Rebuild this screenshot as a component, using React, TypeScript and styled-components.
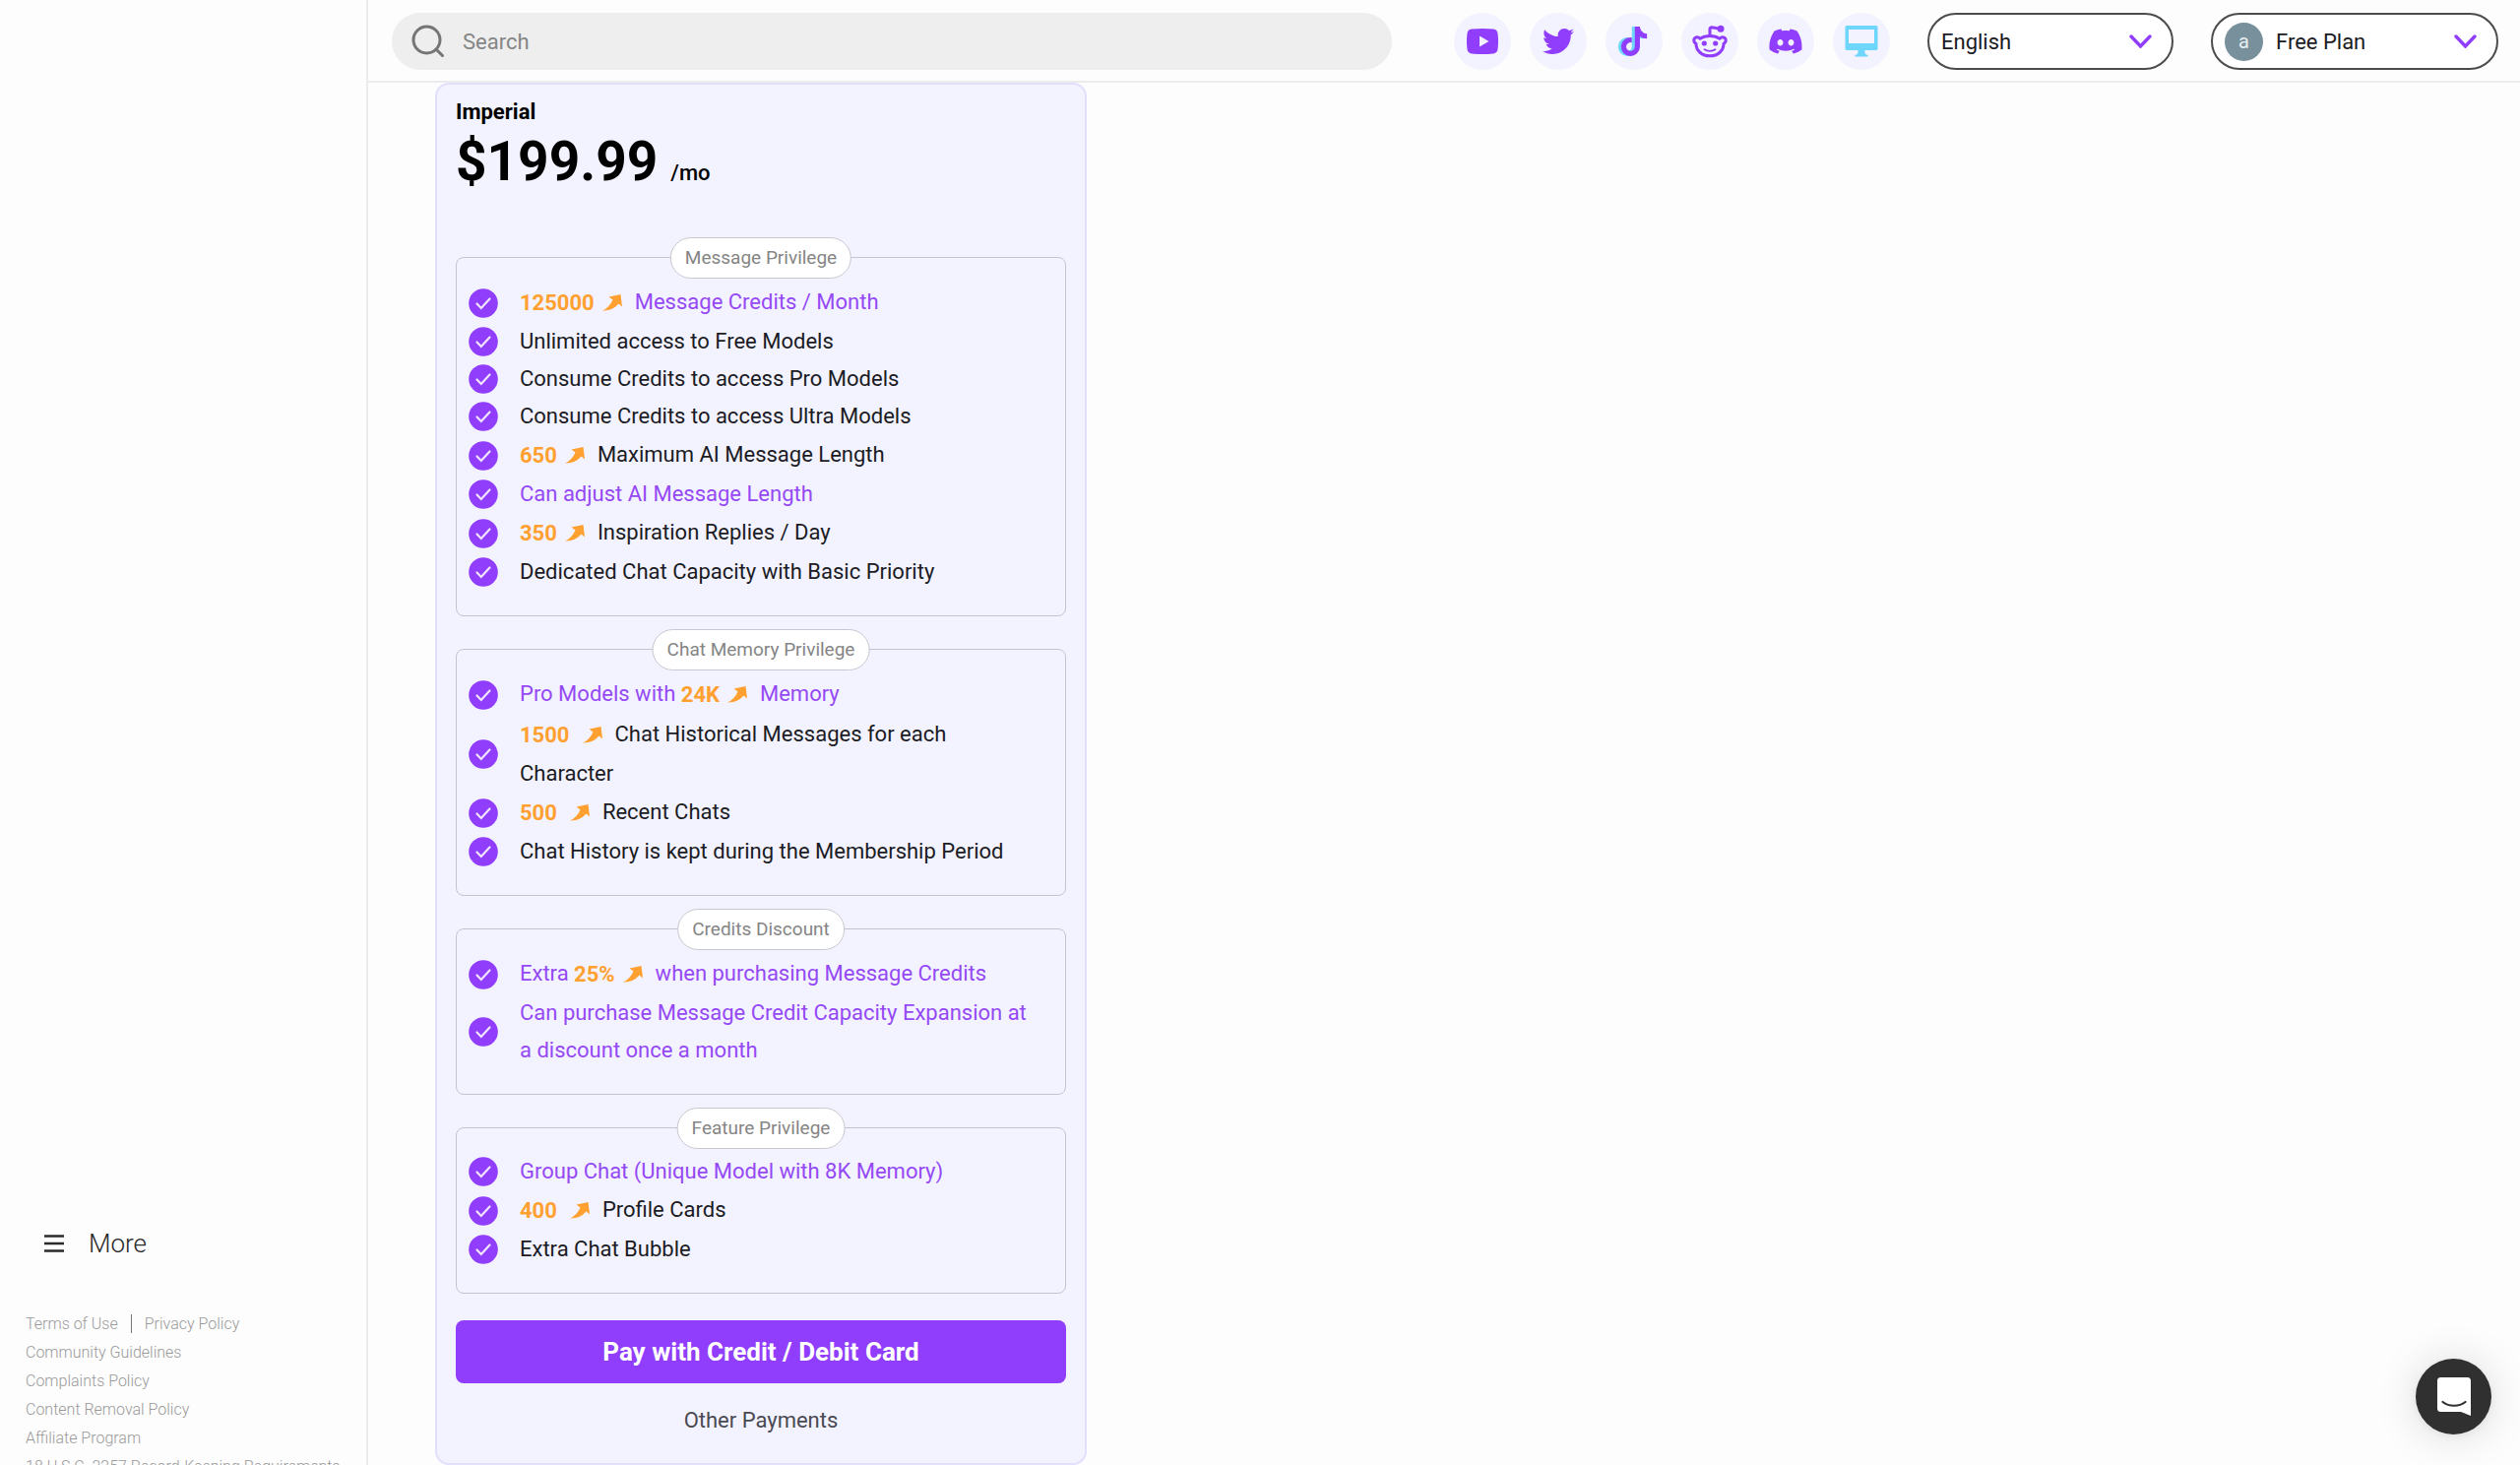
import React, { useState } from 'react';
import styled, { createGlobalStyle } from 'styled-components';
import { FaTwitter, FaDiscord, FaTiktok } from 'react-icons/fa';

const GlobalStyle = createGlobalStyle`
  *, *::before, *::after { box-sizing: border-box; }
  body {
    margin: 0;
    background: #fdfdfd;
    color: #1b1b24;
    font-family: Roboto, "Liberation Sans", sans-serif;
    font-size: 22px;
  }
  button, input, select { font: inherit; color: inherit; }
  ul { list-style: none; margin: 0; padding: 0; }
  h2, h3, p { margin: 0; }
`;

const purple = '#903dfc';
const sky = '#6fd6fb';

const Shell = styled.div`
  display: flex;
  height: 100vh;
  overflow: hidden;
`;

const Sidebar = styled.aside`
  display: flex;
  flex: none;
  flex-direction: column;
  width: 374px;
  border-right: 2px solid #ececee;
`;

const SideNav = styled.nav`
  display: flex;
  flex: 1;
  flex-direction: column;
  justify-content: flex-end;
  padding: 0 44px 43px;
`;

const MoreButton = styled.button`
  display: flex;
  align-items: center;
  gap: 24px;
  height: 48px;
  padding: 0;
  border: 0;
  background: none;
  color: #2a2a2a;
  font-size: 26px;
  font-weight: 300;
  cursor: pointer;
`;

const SideFooter = styled.footer`
  flex: none;
  height: 158px;
  padding-left: 26px;
  overflow: hidden;
  font-size: 16px;
  font-weight: 300;
  line-height: 29px;
  white-space: nowrap;
`;

const FooterRow = styled.li`
  display: flex;
  align-items: center;
  gap: 13px;
`;

const FooterLink = styled.a`
  color: #9a9a9a;
  text-decoration: none;
`;

const FooterDivider = styled.span`
  width: 1px;
  height: 19px;
  background: #777;
`;

const Main = styled.div`
  display: flex;
  flex: 1;
  flex-direction: column;
  min-width: 0;
`;

const Header = styled.header`
  display: flex;
  flex: none;
  align-items: center;
  gap: 38px;
  height: 84px;
  padding: 2px 22px 0 24px;
  border-bottom: 2px solid #ececee;
`;

const SearchBox = styled.label`
  display: flex;
  flex: 0 1 1016px;
  align-items: center;
  gap: 18px;
  height: 58px;
  margin-right: auto;
  padding: 0 20px;
  border-radius: 29px;
  background: #eeeeee;
  color: #757575;
`;

const SearchInput = styled.input`
  flex: 1;
  min-width: 0;
  padding: 0;
  border: 0;
  outline: 0;
  background: none;
  &::placeholder { color: #858585; opacity: 1; }
`;

const Socials = styled.nav`
  display: flex;
  gap: 19px;
`;

const SocialLink = styled.a`
  display: grid;
  place-items: center;
  width: 58px;
  height: 58px;
  border-radius: 50%;
  background: #f3f3ff;
  color: ${purple};
`;

const TikTokMark = styled.span`
  display: grid;
  svg { grid-area: 1 / 1; }
  svg:first-child { margin-left: -3px; color: ${sky}; }
`;

const Picker = styled.div<{ $width: number }>`
  display: flex;
  align-items: center;
  position: relative;
  width: ${(p) => p.$width}px;
  height: 58px;
  border: 2px solid #4c4c4c;
  border-radius: 29px;
  background: #fff;
`;

const PickerSelect = styled.select<{ $indent: number }>`
  appearance: none;
  width: 100%;
  height: 100%;
  padding: 0 60px 0 ${(p) => p.$indent}px;
  border: 0;
  border-radius: 29px;
  outline: 0;
  background: none;
  cursor: pointer;
`;

const PickerChevron = styled.svg`
  position: absolute;
  right: 20px;
  pointer-events: none;
`;

const Avatar = styled.span`
  display: grid;
  position: absolute;
  left: 12px;
  place-items: center;
  width: 39px;
  height: 39px;
  border-radius: 50%;
  background: #78909c;
  color: #e8eef0;
  font-size: 20px;
  pointer-events: none;
`;

const Content = styled.main`
  flex: 1;
  min-height: 0;
  padding: 0 68px;
  overflow: hidden;
`;

const PlanCard = styled.article`
  display: flex;
  flex-direction: column;
  width: 662px;
  max-width: 100%;
  padding: 12px 19px 25px;
  border: 2px solid #e2dffc;
  border-radius: 14px;
  background: #f3f3ff;
`;

const PlanName = styled.h2`
  color: #000;
  font-size: 22px;
  font-weight: 700;
  line-height: 32px;
`;

const Price = styled.p`
  display: flex;
  align-items: baseline;
  gap: 13px;
  margin-bottom: 51px;
  color: #000;
  font-size: 55px;
  font-weight: 700;
  line-height: 68px;
`;

const Period = styled.span`
  font-size: 22px;
  font-weight: 500;
`;

const Groups = styled.div`
  display: flex;
  flex-direction: column;
  gap: 33px;
  margin-bottom: 27px;
`;

const Group = styled.section`
  position: relative;
  padding: 25px 24px 25px 12px;
  border: 1px solid #c4c4d0;
  border-radius: 8px;
`;

const GroupTitle = styled.h3`
  position: absolute;
  top: 0;
  left: 50%;
  transform: translate(-50%, -50%);
  padding: 0 14px;
  border: 1px solid #c8c8cf;
  border-radius: 21px;
  background: #fff;
  color: #858585;
  font-size: 19px;
  font-weight: 400;
  line-height: 40px;
  white-space: nowrap;
`;

const Perk = styled.li<{ $accent?: boolean }>`
  display: flex;
  align-items: center;
  gap: 22px;
  color: ${(p) => (p.$accent ? '#9549f5' : '#1b1b24')};
  line-height: 38px;
`;

const PerkIcon = styled.svg`
  flex: none;
`;

const Amount = styled.strong<{ $wide?: boolean }>`
  margin-right: 13px;
  color: #ffa030;
  font-weight: 700;
  line-height: 41px;
  vertical-align: -1px;
  svg { margin-left: ${(p) => (p.$wide ? 13 : 8)}px; vertical-align: -1px; }
`;

const PayButton = styled.button`
  height: 64px;
  border: 0;
  border-radius: 8px;
  background: ${purple};
  color: #fff;
  font-size: 26px;
  font-weight: 700;
  cursor: pointer;
`;

const OtherButton = styled.button`
  align-self: center;
  margin-top: 20px;
  padding: 0;
  border: 0;
  background: none;
  color: #4a4a52;
  line-height: 36px;
  cursor: pointer;
`;

const ChatLauncher = styled.button`
  display: grid;
  position: fixed;
  right: 29px;
  bottom: 31px;
  place-items: center;
  width: 77px;
  height: 77px;
  padding: 0;
  border: 0;
  border-radius: 50%;
  background: #303030;
  box-shadow: 0 2px 8px rgba(0, 0, 0, 0.06), 0 2px 44px rgba(0, 0, 0, 0.14);
  cursor: pointer;
`;

const YouTubeIcon = () => (
  <svg width="32" height="26" viewBox="0 0 32 26" aria-hidden="true">
    <path fill="currentColor" fillRule="evenodd" d="M5 .6Q16-.5 27 .6q4 .4 4.5 4.400Q32.500 13 31.500 21q-.5 4-4.500 4.400Q16 26.500 5 25.400 1 25 .5 21-.5 13 .5 5 1 1 5 .600ZM13 7.500v11l9.500-5.500Z" />
  </svg>
);

const RedditIcon = () => (
  <svg width="36" height="34" viewBox="0 0 36 34" fill="none" stroke="currentColor" strokeWidth="3" strokeLinecap="round" strokeLinejoin="round" aria-hidden="true">
    <path d="M18 11.500c-4 0-7.500 1-10 2.800C5.500 11.500 1.800 13 1.800 16c0 1.600 1 2.700 2.200 3.300C3.800 26.500 10 31.800 18 31.800s14.200-5.300 14-12.500c1.200-.6 2.200-1.700 2.200-3.300 0-3-3.700-4.500-6.200-1.700-2.500-1.800-6-2.800-10-2.800Z" />
    <path d="M18 11.500v-7q0-1.700 1.800-1.700L27 4" />
    <path d="M12.500 25.300c3 2.200 8 2.200 11 0" strokeWidth="1.800" />
    <circle cx="12.300" cy="19" r="2.600" fill="currentColor" stroke="none" />
    <circle cx="23.700" cy="19" r="2.600" fill="currentColor" stroke="none" />
    <circle cx="29" cy="4.200" r="3.500" fill="currentColor" stroke="none" />
  </svg>
);

const DesktopIcon = () => (
  <svg width="34" height="32" viewBox="0 0 34 32" fill={sky} aria-hidden="true">
    <path fillRule="evenodd" d="M2 0h30q1.500 0 1.500 1.500v22q0 1.500-1.500 1.500H20.500v2.500q0 1.500 3 2.500v1.500h-13V30q3-1 3-2.500V25H2Q.5 25 .5 23.500v-22Q.5 0 2 0Zm2 4v14h26V4Z" />
  </svg>
);

const SearchIcon = () => (
  <svg width="34" height="34" viewBox="0 0 34 34" fill="none" stroke="currentColor" strokeWidth="3" strokeLinecap="round" aria-hidden="true">
    <circle cx="15.500" cy="15.500" r="13.500" />
    <path d="m25.500 25.500 6 6" />
  </svg>
);

const Chevron = () => (
  <PickerChevron width="23" height="14" viewBox="0 0 23 14" fill="none" stroke={purple} strokeWidth="3.400" strokeLinecap="round" aria-hidden="true">
    <path d="m2 2 9.500 10L21 2" />
  </PickerChevron>
);

const MenuIcon = () => (
  <svg width="22" height="20" viewBox="0 0 22 20" stroke="currentColor" strokeWidth="2.500" aria-hidden="true">
    <path d="M1 2.500h20M1 10h20M1 17.500h20" />
  </svg>
);

const CheckIcon = () => (
  <PerkIcon width="30" height="30" viewBox="0 0 30 30" fill="none" aria-hidden="true">
    <circle cx="15" cy="15" r="14.800" fill={purple} />
    <path d="m8.500 15.500 4.300 4.500 8.700-9.500" stroke="#f0e6ff" strokeWidth="2.200" strokeLinecap="round" />
  </PerkIcon>
);

const BoostArrow = () => (
  <svg width="20" height="17" viewBox="0 0 20 17" fill="currentColor" aria-hidden="true">
    <path d="M6.500 2.500 18.500 0l1.500 12.500-3.500-3Q10 17 0 16.500 7 13.500 10.500 5.500Z" />
  </svg>
);

type PerkData = { before?: string; amount?: string; wide?: boolean; text: string; accent?: boolean };

const groups: { title: string; perks: PerkData[] }[] = [
  {
    title: 'Message Privilege',
    perks: [
      { amount: '125000', text: 'Message Credits / Month', accent: true },
      { text: 'Unlimited access to Free Models' },
      { text: 'Consume Credits to access Pro Models' },
      { text: 'Consume Credits to access Ultra Models' },
      { amount: '650', text: 'Maximum AI Message Length' },
      { text: 'Can adjust AI Message Length', accent: true },
      { amount: '350', text: 'Inspiration Replies / Day' },
      { text: 'Dedicated Chat Capacity with Basic Priority' },
    ],
  },
  {
    title: 'Chat Memory Privilege',
    perks: [
      { before: 'Pro Models with ', amount: '24K', text: 'Memory', accent: true },
      { amount: '1500', wide: true, text: 'Chat Historical Messages for each Character' },
      { amount: '500', wide: true, text: 'Recent Chats' },
      { text: 'Chat History is kept during the Membership Period' },
    ],
  },
  {
    title: 'Credits Discount',
    perks: [
      { before: 'Extra ', amount: '25%', text: 'when purchasing Message Credits', accent: true },
      { text: 'Can purchase Message Credit Capacity Expansion at a discount once a month', accent: true },
    ],
  },
  {
    title: 'Feature Privilege',
    perks: [
      { text: 'Group Chat (Unique Model with 8K Memory)', accent: true },
      { amount: '400', wide: true, text: 'Profile Cards' },
      { text: 'Extra Chat Bubble' },
    ],
  },
];

const footerLinks = [
  ['Terms of Use', 'Privacy Policy'],
  ['Community Guidelines'],
  ['Complaints Policy'],
  ['Content Removal Policy'],
  ['Affiliate Program'],
  ['18 U.S.C. 2257 Record-Keeping Requirements'],
];

const socials = [
  { name: 'YouTube', icon: <YouTubeIcon /> },
  { name: 'Twitter', icon: <FaTwitter size={32} /> },
  { name: 'TikTok', icon: <TikTokMark><FaTiktok size={30} /><FaTiktok size={30} /></TikTokMark> },
  { name: 'Reddit', icon: <RedditIcon /> },
  { name: 'Discord', icon: <FaDiscord size={36} /> },
  { name: 'Desktop app', icon: <DesktopIcon /> },
];

export default function App() {
  const [query, setQuery] = useState('');
  return (
    <Shell>
      <GlobalStyle />
      <Sidebar>
        <SideNav>
          <MoreButton type="button"><MenuIcon />More</MoreButton>
        </SideNav>
        <SideFooter>
          <ul>
            {footerLinks.map((row) => (
              <FooterRow key={row[0]}>
                {row.map((label, i) => (
                  <React.Fragment key={label}>
                    {i > 0 && <FooterDivider />}
                    <FooterLink href="#">{label}</FooterLink>
                  </React.Fragment>
                ))}
              </FooterRow>
            ))}
          </ul>
        </SideFooter>
      </Sidebar>
      <Main>
        <Header>
          <SearchBox>
            <SearchIcon />
            <SearchInput type="text" aria-label="Search" placeholder="Search" value={query} onChange={(e) => setQuery(e.target.value)} />
          </SearchBox>
          <Socials aria-label="Social links">
            {socials.map((s) => (
              <SocialLink key={s.name} href="#" aria-label={s.name}>{s.icon}</SocialLink>
            ))}
          </Socials>
          <Picker $width={250}>
            <PickerSelect $indent={12} aria-label="Language" defaultValue="English">
              <option>English</option>
            </PickerSelect>
            <Chevron />
          </Picker>
          <Picker $width={292}>
            <Avatar>a</Avatar>
            <PickerSelect $indent={64} aria-label="Account plan" defaultValue="Free Plan">
              <option>Free Plan</option>
            </PickerSelect>
            <Chevron />
          </Picker>
        </Header>
        <Content>
          <PlanCard>
            <PlanName>Imperial</PlanName>
            <Price>$199.99<Period>/mo</Period></Price>
            <Groups>
              {groups.map((g) => (
                <Group key={g.title}>
                  <GroupTitle>{g.title}</GroupTitle>
                  <ul>
                    {g.perks.map((p) => (
                      <Perk key={p.text} $accent={p.accent}>
                        <CheckIcon />
                        <span>
                          {p.before}
                          {p.amount && <Amount $wide={p.wide}>{p.amount}<BoostArrow /></Amount>}
                          {p.text}
                        </span>
                      </Perk>
                    ))}
                  </ul>
                </Group>
              ))}
            </Groups>
            <PayButton type="button">Pay with Credit / Debit Card</PayButton>
            <OtherButton type="button">Other Payments</OtherButton>
          </PlanCard>
        </Content>
      </Main>
      <ChatLauncher type="button" aria-label="Open chat">
        <svg width="36" height="40" viewBox="0 0 36 40" aria-hidden="true">
          <path fill="#fff" d="M4.500 0h27Q35 0 35 3.500V39l-10-4H4.500Q1 35 1 31.500v-28Q1 0 4.500 0Z" />
          <path fill="none" stroke="#303030" strokeWidth="2.200" strokeLinecap="round" d="M6.500 25c6.500 5 16.500 5 23 0" />
        </svg>
      </ChatLauncher>
    </Shell>
  );
}
